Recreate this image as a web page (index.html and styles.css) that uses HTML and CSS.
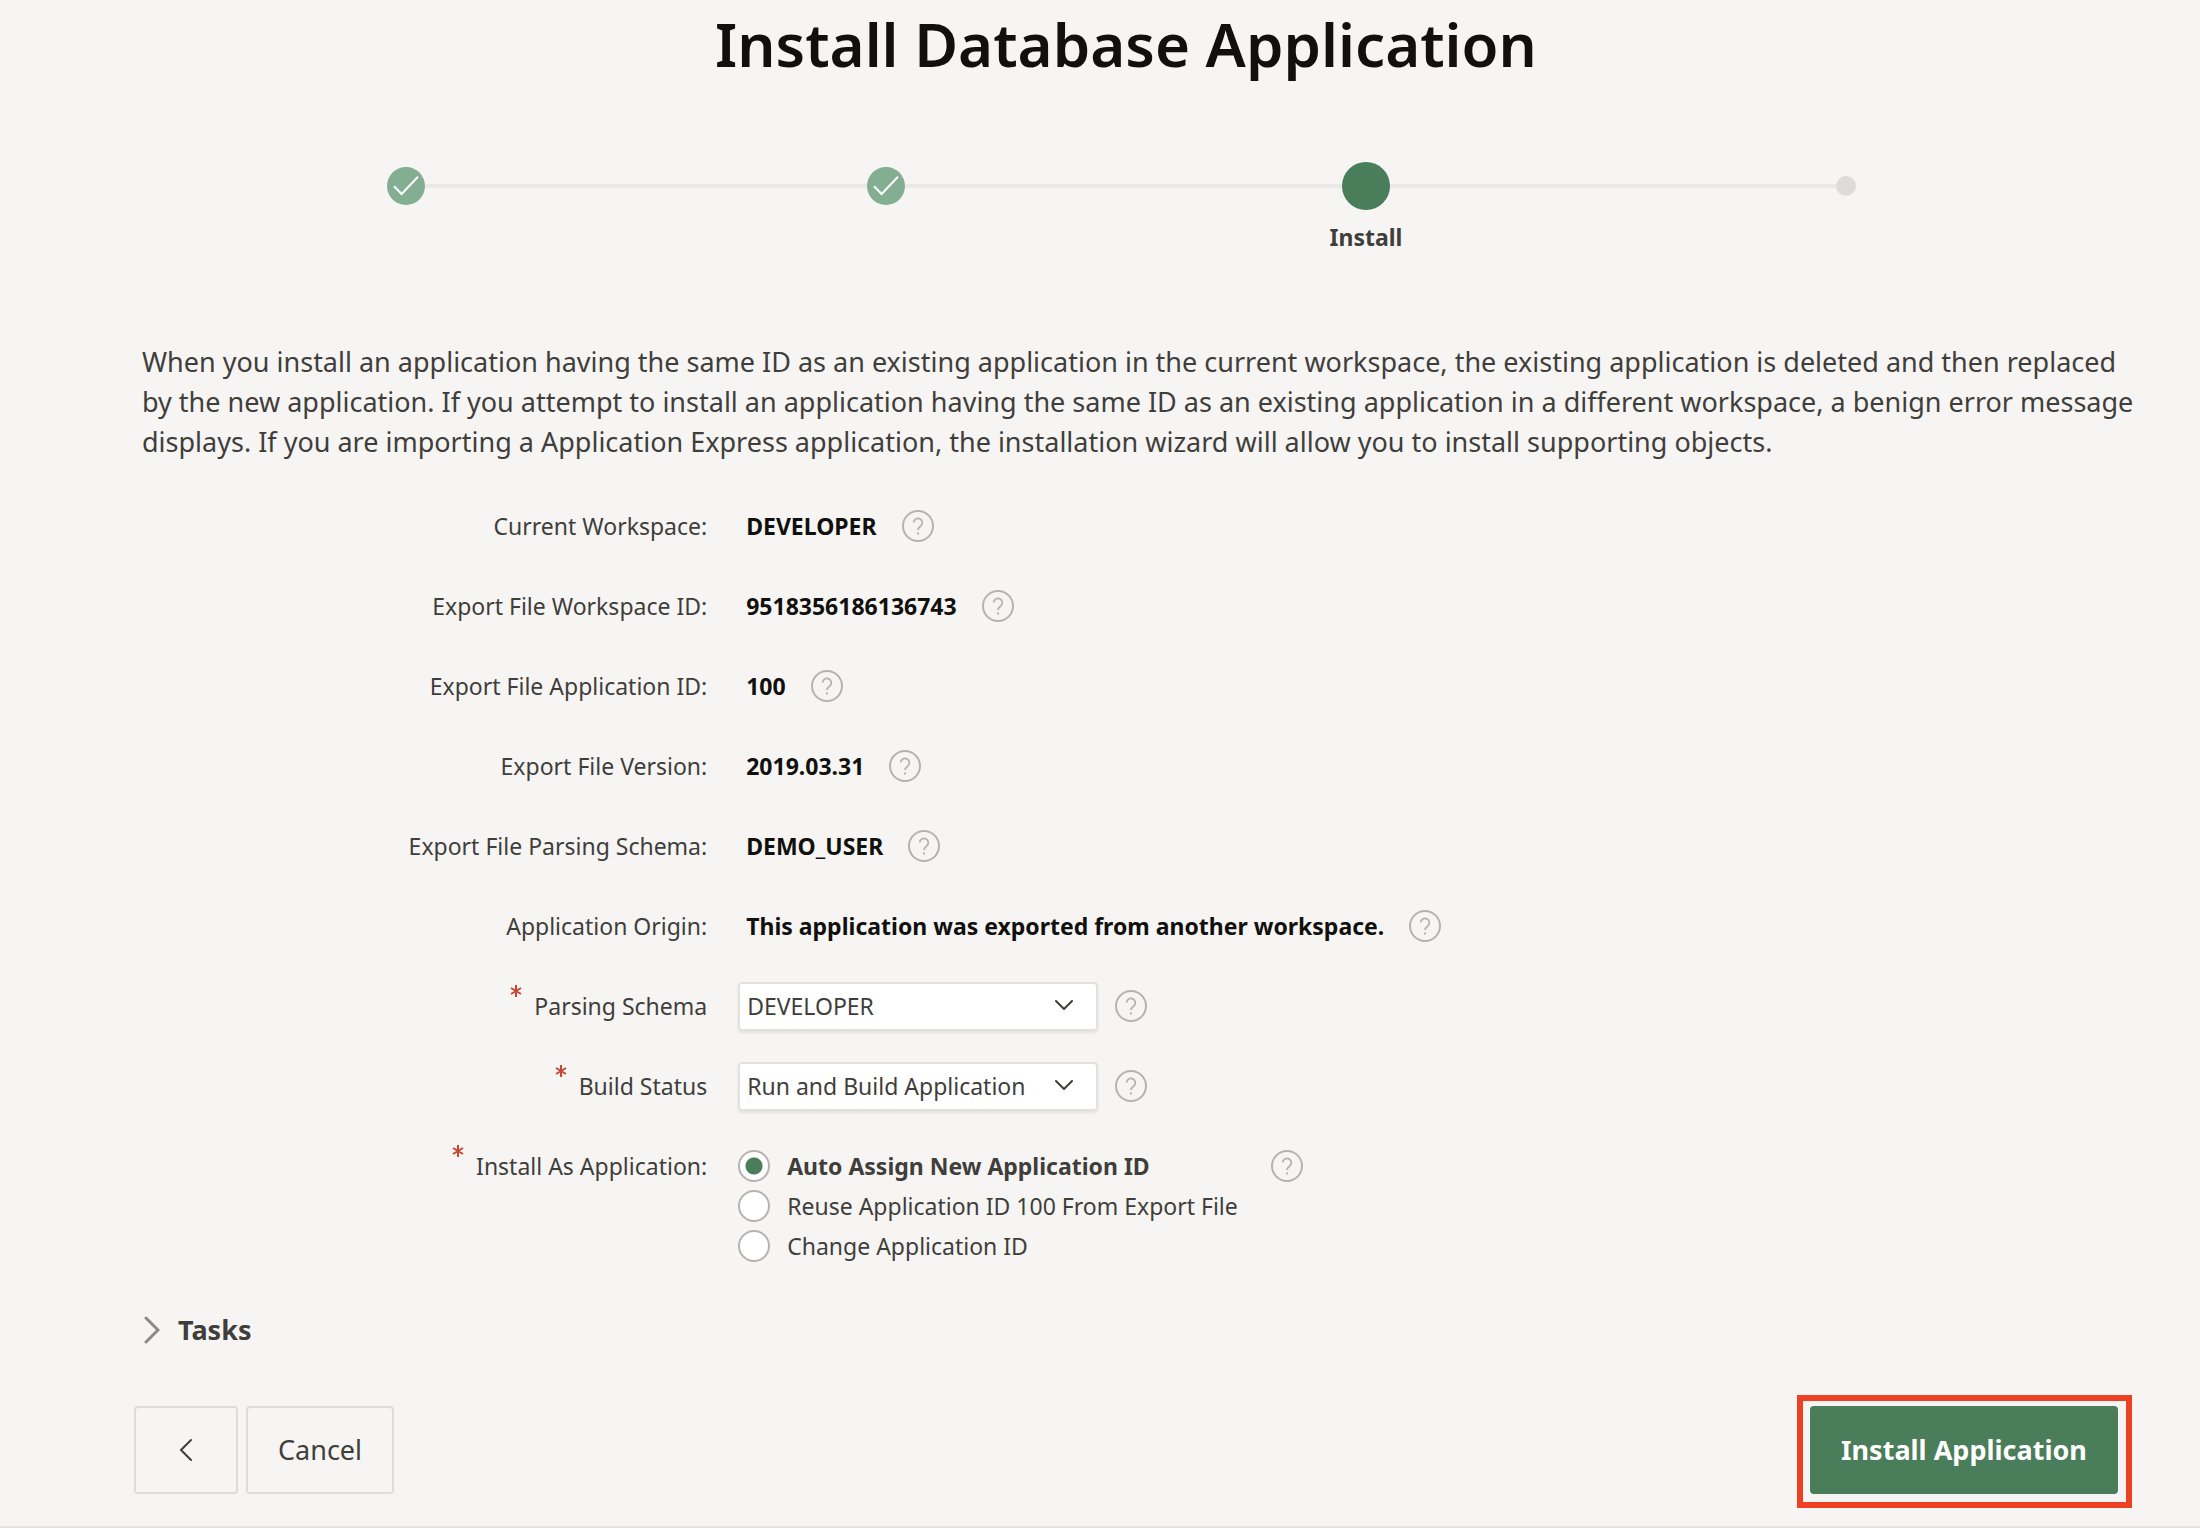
FILE: index.html
```html
<!DOCTYPE html>
<html lang="en">
<head>
<meta charset="utf-8">
<meta name="viewport" content="width=device-width, initial-scale=1">
<title>Install Database Application</title>
<link rel="stylesheet" href="styles.css">
</head>
<body>
<svg class="sprite" aria-hidden="true">
  <symbol id="help" viewBox="0 0 32 32">
    <circle cx="16" cy="16" r="15" fill="none" stroke="currentColor" stroke-width="2"/>
    <path d="M11.7 12.6a4.3 4.3 0 1 1 6.9 3.5c-1.6 1.2-2.6 1.9-2.6 4" fill="none" stroke="currentColor" stroke-width="1.8"/>
    <path d="M15 22.4h2v2h-2z" fill="currentColor"/>
  </symbol>
  <symbol id="check" viewBox="0 0 38 38">
    <path d="M7 19.3l7.6 7.7L31 9.8" fill="none" stroke="currentColor" stroke-width="2"/>
  </symbol>
  <symbol id="down" viewBox="0 0 18 10">
    <path d="M1 1l8 8 8-8" fill="none" stroke="currentColor" stroke-width="2" stroke-linecap="round"/>
  </symbol>
</svg>

<main class="wizard">
  <h1 class="title">Install Database Application</h1>

  <ol class="steps">
    <li class="step"><span class="marker done"><svg><use href="#check"/></svg></span></li>
    <li class="step"><span class="marker done"><svg><use href="#check"/></svg></span></li>
    <li class="step" aria-current="step"><span class="marker current"></span><span class="step-label">Install</span></li>
    <li class="step"><span class="marker next"></span></li>
  </ol>

  <p class="intro">When you install an application having the same ID as an existing application in the current workspace, the existing application is deleted and then replaced by the new application. If you attempt to install an application having the same ID as an existing application in a different workspace, a benign error message displays. If you are importing a Application Express application, the installation wizard will allow you to install supporting objects.</p>

  <form class="form">
    <div class="row">
      <label class="label" for="workspace">Current Workspace:</label>
      <div class="field"><output class="value" id="workspace">DEVELOPER</output><button class="help" type="button" aria-label="Help"><svg><use href="#help"/></svg></button></div>
    </div>
    <div class="row">
      <label class="label" for="workspace-id">Export File Workspace ID:</label>
      <div class="field"><output class="value" id="workspace-id">9518356186136743</output><button class="help" type="button" aria-label="Help"><svg><use href="#help"/></svg></button></div>
    </div>
    <div class="row">
      <label class="label" for="app-id">Export File Application ID:</label>
      <div class="field"><output class="value" id="app-id">100</output><button class="help" type="button" aria-label="Help"><svg><use href="#help"/></svg></button></div>
    </div>
    <div class="row">
      <label class="label" for="version">Export File Version:</label>
      <div class="field"><output class="value" id="version">2019.03.31</output><button class="help" type="button" aria-label="Help"><svg><use href="#help"/></svg></button></div>
    </div>
    <div class="row">
      <label class="label" for="file-schema">Export File Parsing Schema:</label>
      <div class="field"><output class="value" id="file-schema">DEMO_USER</output><button class="help" type="button" aria-label="Help"><svg><use href="#help"/></svg></button></div>
    </div>
    <div class="row">
      <label class="label" for="origin">Application Origin:</label>
      <div class="field"><output class="value" id="origin">This application was exported from another workspace.</output><button class="help" type="button" aria-label="Help"><svg><use href="#help"/></svg></button></div>
    </div>
    <div class="row">
      <label class="label" for="schema"><svg class="required" viewBox="0 0 12 12"><path d="M6 0v12M1 3l10 6M11 3L1 9"/></svg>Parsing Schema</label>
      <div class="field">
        <span class="select"><select id="schema"><option>DEVELOPER</option></select><svg class="arrow"><use href="#down"/></svg></span>
        <button class="help" type="button" aria-label="Help"><svg><use href="#help"/></svg></button>
      </div>
    </div>
    <div class="row">
      <label class="label" for="status"><svg class="required" viewBox="0 0 12 12"><path d="M6 0v12M1 3l10 6M11 3L1 9"/></svg>Build Status</label>
      <div class="field">
        <span class="select"><select id="status"><option>Run and Build Application</option></select><svg class="arrow"><use href="#down"/></svg></span>
        <button class="help" type="button" aria-label="Help"><svg><use href="#help"/></svg></button>
      </div>
    </div>
    <div class="row" role="radiogroup" aria-labelledby="install-as">
      <span class="label" id="install-as"><svg class="required" viewBox="0 0 12 12"><path d="M6 0v12M1 3l10 6M11 3L1 9"/></svg>Install As Application:</span>
      <div class="field top">
        <div class="options">
          <label class="option"><input type="radio" name="install-as" checked><span>Auto Assign New Application ID</span></label>
          <label class="option"><input type="radio" name="install-as"><span>Reuse Application ID 100 From Export File</span></label>
          <label class="option"><input type="radio" name="install-as"><span>Change Application ID</span></label>
        </div>
        <button class="help" type="button" aria-label="Help"><svg><use href="#help"/></svg></button>
      </div>
    </div>
  </form>

  <button class="tasks" type="button" aria-expanded="false">
    <svg viewBox="0 0 16 28"><path d="M2 2l12 12L2 26"/></svg>Tasks
  </button>

  <footer class="actions">
    <button class="button back" type="button" aria-label="Back"><svg viewBox="0 0 14 24"><path d="M12 2L2 12l10 10"/></svg></button>
    <button class="button" type="button">Cancel</button>
    <span class="highlight"><button class="button primary" type="button">Install Application</button></span>
  </footer>
</main>
</body>
</html>
```
FILE: styles.css
```css
*, *::before, *::after { box-sizing: border-box; }

body {
  margin: 0;
  background: #f6f5f3;
  color: #3f3e3b;
  font-family: "Noto Sans", "Open Sans", sans-serif;
  font-size: 23px;
  line-height: 32px;
}

button, select, input { font: inherit; color: inherit; margin: 0; }
button { background: none; border: 0; padding: 0; cursor: pointer; }

.sprite { display: none; }

.wizard {
  padding: 2px 82px 32px 134px;
  border-bottom: 2px solid #e4e4e1;
}

.title {
  margin: 0;
  font-size: 60px;
  font-weight: 600;
  line-height: 84px;
  text-align: center;
  color: #11100e;
}

/* progress */
.steps {
  display: flex;
  margin: 76px 32px 0;
  padding: 0;
  list-style: none;
}

.step {
  flex: 1;
  position: relative;
  display: flex;
  flex-direction: column;
  align-items: center;
  height: 132px;
}

.step:not(:last-child)::before {
  content: "";
  position: absolute;
  top: 22px;
  left: 50%;
  width: 100%;
  height: 4px;
  background: #eae9e5;
}

.marker { position: relative; z-index: 1; border-radius: 50%; }
.marker svg { display: block; width: 100%; height: 100%; }
.done { width: 38px; height: 38px; margin-top: 5px; background: #83ae92; color: #fff; }
.current { width: 48px; height: 48px; background: #4a7d59; }
.next { width: 20px; height: 20px; margin-top: 14px; background: #dddcd8; }
.step-label { margin-top: 11px; font-weight: 700; }

.intro {
  margin: 48px -16px 0 8px;
  font-size: 27px;
  line-height: 40px;
}

/* form */
.form { margin-top: 24px; }

.row {
  display: grid;
  grid-template-columns: 3fr 7fr;
  align-items: start;
  min-height: 80px;
  padding-top: 16px;
}

.label {
  display: flex;
  justify-content: flex-end;
  gap: 12px;
  padding: 8px 22px 0 0;
}

.required {
  width: 12px;
  height: 12px;
  margin-top: -5px;
  fill: none;
  stroke: #c74634;
  stroke-width: 2;
}

.field {
  display: flex;
  align-items: center;
  gap: 17px;
  height: 48px;
  padding-left: 9px;
}

.value {
  padding: 0 8px;
  font-weight: 700;
  color: #11100e;
}

.help { flex: none; width: 32px; height: 32px; color: #b4b3b0; }
.help svg { display: block; width: 32px; height: 32px; }

.select { position: relative; display: flex; }

.select select {
  appearance: none;
  width: 360px;
  height: 49px;
  padding: 0 40px 0 7px;
  background: #fff;
  border: 2px solid #e2e1dd;
  border-radius: 4px;
  box-shadow: 0 2px 3px rgba(0, 0, 0, .08);
}

.arrow {
  position: absolute;
  top: 18px;
  right: 25px;
  width: 18px;
  height: 10px;
  pointer-events: none;
}

.field.top { height: auto; padding-top: 8px; align-items: flex-start; gap: 33px; }
.options { display: grid; gap: 8px; }
.option { display: flex; gap: 17px; }

.option input {
  appearance: none;
  width: 32px;
  height: 32px;
  background: #fff;
  border: 2px solid #b4b3b0;
  border-radius: 50%;
}

.option input:checked {
  background: radial-gradient(circle, #4a7d59 8px, #fff 9px);
}

.option input:checked + span { font-weight: 700; }

/* collapsible region */
.tasks {
  display: flex;
  align-items: center;
  gap: 18px;
  margin: 48px 0 0 10px;
  font-size: 27px;
  font-weight: 700;
  line-height: 40px;
}

.tasks svg { width: 16px; height: 28px; fill: none; stroke: #8b8a88; stroke-width: 3; stroke-linecap: round; }

/* buttons */
.actions { display: flex; gap: 8px; margin-top: 56px; }

.button {
  height: 88px;
  padding: 0 30px;
  border: 2px solid #dddcd9;
  border-radius: 4px;
  font-size: 27px;
  line-height: 40px;
}

.back { display: grid; place-items: center; width: 104px; padding: 0; }
.back svg { width: 14px; height: 24px; fill: none; stroke: #3f3e3b; stroke-width: 2; stroke-linecap: round; }

.primary {
  width: 308px;
  padding: 0;
  background: #4a7d59;
  border-color: #4a7d59;
  color: #fff;
  font-weight: 700;
}

.highlight {
  position: relative;
  margin-left: auto;
}

.highlight::after {
  content: "";
  position: absolute;
  inset: -11px -14px -14px -13px;
  border: 6px solid #ee4023;
  pointer-events: none;
}
```
